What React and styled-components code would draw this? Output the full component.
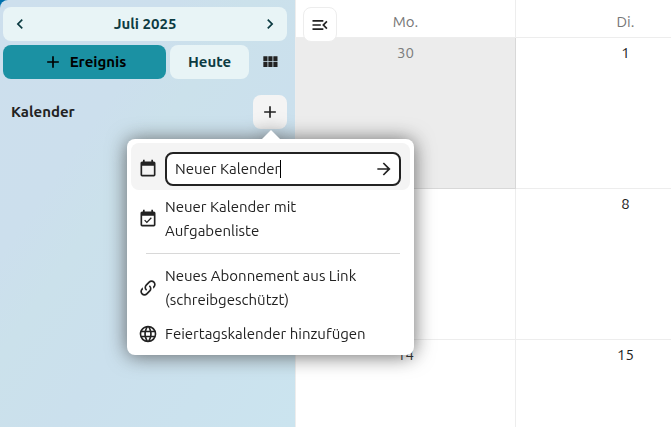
import React, { useState } from "react";
import styled, { createGlobalStyle } from "styled-components";

const GlobalStyle = createGlobalStyle`
  * {
    box-sizing: border-box;
  }
  body {
    margin: 0;
    background: #0071ad;
    color: #222;
    font-family: Ubuntu, "Noto Sans", sans-serif;
    font-size: 15px;
    line-height: 24px;
  }
  button,
  input {
    font: inherit;
    color: inherit;
  }
`;

const icons = {
  left: "M15.41,16.58L10.83,12L15.41,7.41L14,6L8,12L14,18L15.41,16.58Z",
  right: "M8.59,16.58L13.17,12L8.59,7.41L10,6L16,12L10,18L8.59,16.58Z",
  plus: "M19,13H13V19H11V13H5V11H11V5H13V11H19V13Z",
  grid: "M16,5V11H21V5M10,11H15V5H10M16,18H21V12H16M10,18H15V12H10M4,18H9V12H4M4,11H9V5H4V11Z",
  menuOpen:
    "M21,15.61L19.59,17L14.58,12L19.59,7L21,8.39L17.44,12L21,15.61M3,6H16V8H3V6M3,13V11H13V13H3M3,18V16H16V18H3Z",
  arrow: "M4,11V13H16L10.5,18.5L11.92,19.92L19.84,12L11.92,4.08L10.5,5.5L16,11H4Z",
  calendar:
    "M19,19H5V8H19M16,1V3H8V1H6V3H5C3.89,3 3,3.89 3,5V19A2,2 0 0,0 5,21H19A2,2 0 0,0 21,19V5C21,3.89 20.1,3 19,3H18V1",
  calendarCheck:
    "M19,19H5V8H19M16,1V3H8V1H6V3H5C3.89,3 3,3.89 3,5V19A2,2 0 0,0 5,21H19A2,2 0 0,0 21,19V5C21,3.89 20.1,3 19,3H18V1M16.53,11.06L15.47,10L10.59,14.88L8.47,12.76L7.41,13.82L10.59,17L16.53,11.06Z",
  link: "M10.59,13.41C11,13.8 11,14.44 10.59,14.83C10.2,15.22 9.56,15.22 9.17,14.83C7.22,12.88 7.22,9.71 9.17,7.76V7.76L12.71,4.22C14.66,2.27 17.83,2.27 19.78,4.22C21.73,6.17 21.73,9.34 19.78,11.29L18.29,12.78C18.3,11.96 18.17,11.14 17.89,10.36L18.36,9.88C19.54,8.71 19.54,6.81 18.36,5.64C17.19,4.46 15.29,4.46 14.12,5.64L10.59,9.17C9.41,10.34 9.41,12.24 10.59,13.41M13.41,9.17C13.8,8.78 14.44,8.78 14.83,9.17C16.78,11.12 16.78,14.29 14.83,16.24V16.24L11.29,19.78C9.34,21.73 6.17,21.73 4.22,19.78C2.27,17.83 2.27,14.66 4.22,12.71L5.71,11.22C5.7,12.04 5.83,12.86 6.11,13.65L5.64,14.12C4.46,15.29 4.46,17.19 5.64,18.36C6.81,19.54 8.71,19.54 9.88,18.36L13.41,14.83C14.59,13.66 14.59,11.76 13.41,10.59C13,10.2 13,9.56 13.41,9.17Z",
  web: "M16.36,14C16.44,13.34 16.5,12.68 16.5,12C16.5,11.32 16.44,10.66 16.36,10H19.74C19.9,10.64 20,11.31 20,12C20,12.69 19.9,13.36 19.74,14M14.59,19.56C15.19,18.45 15.65,17.25 15.97,16H18.92C17.96,17.65 16.43,18.93 14.59,19.56M14.34,14H9.66C9.56,13.34 9.5,12.68 9.5,12C9.5,11.32 9.56,10.65 9.66,10H14.34C14.43,10.65 14.5,11.32 14.5,12C14.5,12.68 14.43,13.34 14.34,14M12,19.96C11.17,18.76 10.5,17.43 10.09,16H13.91C13.5,17.43 12.83,18.76 12,19.96M8,8H5.08C6.03,6.34 7.57,5.06 9.4,4.44C8.8,5.55 8.35,6.75 8,8M5.08,16H8C8.35,17.25 8.8,18.45 9.4,19.56C7.57,18.93 6.03,17.65 5.08,16M4.26,14C4.1,13.36 4,12.69 4,12C4,11.31 4.1,10.64 4.26,10H7.64C7.56,10.66 7.5,11.32 7.5,12C7.5,12.68 7.56,13.34 7.64,14M12,4.03C12.83,5.23 13.5,6.57 13.91,8H10.09C10.5,6.57 11.17,5.23 12,4.03M18.92,8H15.97C15.65,6.75 15.19,5.55 14.59,4.44C16.43,5.07 17.96,6.34 18.92,8M12,2C6.47,2 2,6.5 2,12A10,10 0 0,0 12,22A10,10 0 0,0 22,12A10,10 0 0,0 12,2Z"
};

const Svg = styled.svg`
  display: block;
  flex: none;
  width: 20px;
  height: 20px;
  fill: currentColor;
`;

const Icon = ({ name }) => (
  <Svg viewBox="0 0 24 24" aria-hidden="true">
    <path d={icons[name]} />
  </Svg>
);

const Page = styled.div`
  display: flex;
  height: 100vh;
  overflow: hidden;
`;

const Sidebar = styled.aside`
  flex: none;
  width: 295px;
  padding: 7px 8px 0 3px;
  border-top-left-radius: 8px;
  background: linear-gradient(
    125deg,
    #cddfed 0%,
    #ccdfed 30%,
    #cbe1eb 42%,
    #cbe0ed 60%,
    #cbe2ee 80%,
    #cbe4ef 100%
  );
`;

const Bar = styled.div`
  display: flex;
  gap: 4px;
  margin-bottom: 4px;
`;

const DateBar = styled(Bar)`
  gap: 0;
  border-radius: 8px;
  background: #e8f4f6;
  color: #0c3b42;
`;

const Button = styled.button`
  display: flex;
  align-items: center;
  justify-content: center;
  height: 34px;
  min-width: 34px;
  padding: 0;
  border: 0;
  border-radius: 8px;
  background: transparent;
  font-weight: 600;
  cursor: pointer;
`;

const DateButton = styled(Button)`
  flex: 1;
`;

const NewEvent = styled(Button)`
  flex: 1;
  gap: 7px;
  background: #1b91a3;
  color: #000;
`;

const Today = styled(Button)`
  width: 79px;
  background: #e8f4f6;
  color: #0c3b42;
`;

// 日历标题和新建按钮
const Caption = styled.div`
  position: relative;
  display: flex;
  align-items: center;
  justify-content: space-between;
  margin-top: 16px;
  padding-left: 8px;
`;

const Heading = styled.h2`
  margin: 0;
  font-size: 15px;
  font-weight: 600;
`;

const AddButton = styled(Button)`
  background: #f4f4f4;
`;

// 弹出菜单
const Popover = styled.div`
  position: absolute;
  z-index: 5;
  top: 44px;
  left: 124px;
  width: 287px;
  padding: 4px;
  border-radius: 8px;
  background: #fff;
  filter: drop-shadow(0 1px 10px rgba(77, 77, 77, 0.85));

  &::before {
    content: "";
    position: absolute;
    bottom: 100%;
    right: 134px;
    border: 9px solid transparent;
    border-top-width: 0;
    border-bottom-color: #fff;
  }
`;

const Menu = styled.ul`
  margin: 0;
  padding: 0;
  list-style: none;
`;

const EditRow = styled.form`
  display: flex;
  align-items: center;
  gap: 7px;
  height: 47px;
  padding: 4px 9px 0 7px;
  border-radius: 8px;
  background: #f4f4f4;
`;

const Field = styled.div`
  flex: 1;
  display: flex;
  align-items: center;
  height: 34px;
  padding-left: 8px;
  border: 2px solid #222;
  border-radius: 8px;
  background: #fff;
`;

const NameInput = styled.input`
  field-sizing: content;
  min-width: 4px;
  max-width: 180px;
  padding: 0;
  border: 0;
  outline: 0;
  background: transparent;
  caret-color: transparent;
`;

const Caret = styled.span`
  width: 1px;
  height: 18px;
  background: #000;
`;

const Submit = styled(Button)`
  height: 30px;
  min-width: 30px;
  margin-left: auto;
`;

const MenuButton = styled.button`
  display: flex;
  align-items: center;
  gap: 7px;
  width: 100%;
  padding: 5px 34px 5px 7px;
  border: 0;
  border-radius: 8px;
  background: transparent;
  text-align: left;
  cursor: pointer;
`;

const Separator = styled.li`
  height: 1px;
  margin: 5px 10px 5px 15px;
  background: #d8d8d8;
`;

const Main = styled.main`
  position: relative;
  flex: 1;
  min-width: 0;
  border-left: 1px solid #ededed;
  background: #fff;
`;

const Toggle = styled(Button)`
  position: absolute;
  top: 7px;
  left: 7px;
  height: 35px;
  border: 1px solid #ededed;
  background: #fff;
`;

const MonthTable = styled.table`
  width: 100%;
  min-width: 440px;
  table-layout: fixed;
  border-collapse: separate;
  border-spacing: 0;
`;

const DayName = styled.th`
  height: 38px;
  padding: 7px 0 0;
  border-right: 1px solid #ededed;
  border-bottom: 1px solid #ededed;
  color: #767676;
  font-weight: 400;
`;

const Day = styled.td`
  height: 151px;
  padding: 3px 0 0;
  border-right: 1px solid ${props => (props.$other ? "#d8d8d8" : "#ededed")};
  border-bottom: 1px solid ${props => (props.$other ? "#d8d8d8" : "#ededed")};
  background: ${props => (props.$other ? "#ececec" : "#fff")};
  color: ${props => (props.$other ? "#7d7d7d" : "#222")};
  text-align: center;
  vertical-align: top;
`;

const weeks = [
  [30, 1],
  [7, 8],
  [14, 15]
];

const MenuItem = ({ icon, children }) => (
  <li>
    <MenuButton type="button">
      <Icon name={icon} />
      <span>{children}</span>
    </MenuButton>
  </li>
);

function NewCalendarMenu() {
  const [name, setName] = useState("Neuer Kalender");

  return (
    <Popover>
      <Menu>
        <li>
          <EditRow onSubmit={e => e.preventDefault()}>
            <Icon name="calendar" />
            <Field>
              <NameInput
                aria-label="Neuer Kalender"
                value={name}
                onChange={e => setName(e.target.value)}
              />
              <Caret />
              <Submit type="submit" aria-label="Speichern">
                <Icon name="arrow" />
              </Submit>
            </Field>
          </EditRow>
        </li>
        <MenuItem icon="calendarCheck">Neuer Kalender mit Aufgabenliste</MenuItem>
        <Separator role="separator" />
        <MenuItem icon="link">Neues Abonnement aus Link (schreibgeschützt)</MenuItem>
        <MenuItem icon="web">Feiertagskalender hinzufügen</MenuItem>
      </Menu>
    </Popover>
  );
}

function App() {
  return (
    <Page>
      <GlobalStyle />
      {/* 侧边栏 */}
      <Sidebar>
        <DateBar>
          <Button aria-label="Vorheriger Monat">
            <Icon name="left" />
          </Button>
          <DateButton>Juli 2025</DateButton>
          <Button aria-label="Nächster Monat">
            <Icon name="right" />
          </Button>
        </DateBar>
        <Bar>
          <NewEvent>
            <Icon name="plus" />
            Ereignis
          </NewEvent>
          <Today>Heute</Today>
          <Button aria-label="Ansicht">
            <Icon name="grid" />
          </Button>
        </Bar>
        <Caption>
          <Heading>Kalender</Heading>
          <AddButton aria-label="Kalender hinzufügen">
            <Icon name="plus" />
          </AddButton>
          <NewCalendarMenu />
        </Caption>
      </Sidebar>
      {/* 月视图 */}
      <Main>
        <MonthTable>
          <thead>
            <tr>
              <DayName>Mo.</DayName>
              <DayName>Di.</DayName>
            </tr>
          </thead>
          <tbody>
            {weeks.map((week, index) => (
              <tr key={index}>
                {week.map(day => (
                  <Day key={day} $other={day === 30}>
                    {day}
                  </Day>
                ))}
              </tr>
            ))}
          </tbody>
        </MonthTable>
        <Toggle aria-label="Navigation schließen">
          <Icon name="menuOpen" />
        </Toggle>
      </Main>
    </Page>
  );
}

export default App;
